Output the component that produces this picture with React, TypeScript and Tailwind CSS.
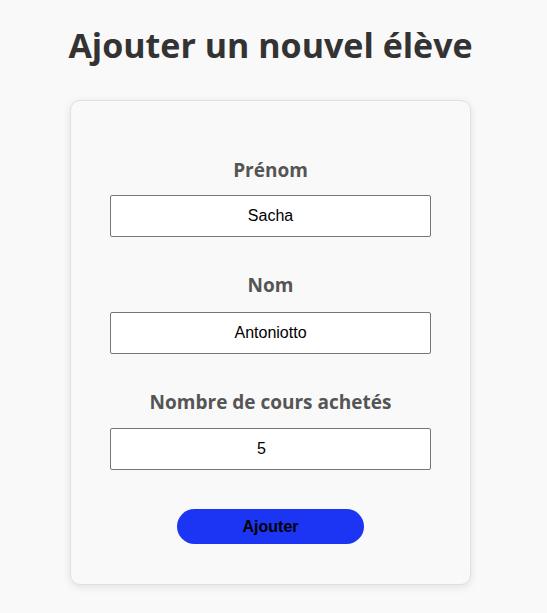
import { useState } from "react";

export default function App() {
  const [prenom, setPrenom] = useState("Sacha");
  const [nom, setNom] = useState("Antoniotto");
  const [cours, setCours] = useState("5");

  const inputCls =
    "w-[321px] h-[42px] bg-white border border-[#767676] rounded-[2px] text-center text-[16px] text-black font-['Liberation_Sans',Arial,sans-serif] outline-none";
  const labelCls = "text-[19px] leading-[28px] font-bold text-[#555]";

  return (
    <div className="min-h-screen bg-[#f9f9f9] pr-[6px] flex flex-col items-center font-['Open_Sans','Noto_Sans',sans-serif]">
      <h1 className="mt-[23px] text-[34px] leading-[44px] font-bold text-[#333]">
        Ajouter un nouvel élève
      </h1>

      <form
        onSubmit={(e) => e.preventDefault()}
        className="mt-[33px] w-[401px] bg-[#f9f9f9] border border-[#e0e0e0] rounded-[10px] shadow-[0_2px_8px_rgba(0,0,0,0.1)] pt-[55px] pb-[40px] flex flex-col items-center"
      >
        <label className={labelCls}>Prénom</label>
        <input className={`${inputCls} mt-[11px]`} value={prenom} onChange={(e) => setPrenom(e.target.value)} />

        <label className={`${labelCls} mt-[34px]`}>Nom</label>
        <input className={`${inputCls} mt-[13px]`} value={nom} onChange={(e) => setNom(e.target.value)} />

        <label className={`${labelCls} mt-[34px]`}>Nombre de cours achetés</label>
        <input
          className={`${inputCls} mt-[12px] pr-[18px]`}
          inputMode="numeric"
          value={cours}
          onChange={(e) => setCours(e.target.value)}
        />

        <button
          type="submit"
          className="mt-[39px] w-[187px] h-[35px] rounded-full bg-[#1c35f5] text-black font-bold text-[16px] font-['Liberation_Sans',Arial,sans-serif]"
        >
          Ajouter
        </button>
      </form>
    </div>
  );
}
